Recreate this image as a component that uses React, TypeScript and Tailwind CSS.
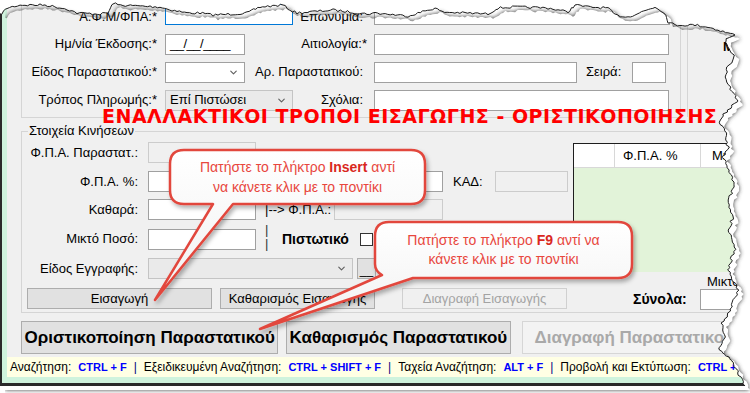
import { ChevronDown } from "lucide-react"
import type { ReactNode } from "react"

type Pt = [number, number]

function rng(seed: number) {
  let s = seed
  return () => {
    s = (s * 16807) % 2147483647
    return (s - 1) / 2147483646
  }
}

// jagged line through anchor points, noise on one axis
function jag(anchors: Pt[], axis: "x" | "y", amp: number, seed: number): Pt[] {
  const r = rng(seed)
  const pts: Pt[] = []
  for (let i = 0; i < anchors.length - 1; i++) {
    const [x0, y0] = anchors[i]
    const [x1, y1] = anchors[i + 1]
    const n = Math.max(1, Math.round(Math.hypot(x1 - x0, y1 - y0) / 2.5))
    for (let k = 0; k < n; k++) {
      const t = k / n
      const d = (r() - 0.5) * 2 * amp
      pts.push([x0 + (x1 - x0) * t + (axis === "x" ? d : 0), y0 + (y1 - y0) * t + (axis === "y" ? d : 0)])
    }
  }
  pts.push(anchors[anchors.length - 1])
  return pts
}

const TOP: Pt[] = [
  [0, 15], [7, 8], [20, 5], [45, 5], [67, 9], [77, 13], [100, 14], [108, 13], [113, 3], [118, 5],
  [160, 7], [167, 9], [187, 13], [200, 13], [213, 15], [233, 14], [247, 13], [260, 7], [283, 5],
  [290, 10], [297, 13], [333, 10], [350, 12], [367, 14], [375, 13], [408, 16], [435, 8], [442, 12],
  [488, 14], [498, 8], [515, 7], [548, 8], [568, 12], [575, 5], [588, 7], [608, 8], [615, 15],
  [628, 17], [655, 7], [665, 13], [668, 22], [675, 25], [695, 25], [708, 27], [718, 30], [728, 33], [735, 35],
]

const RIGHT: Pt[] = [
  [735, 35], [725, 40], [728, 47], [735, 57], [728, 67], [725, 77], [730, 87], [738, 100], [728, 110],
  [719, 120], [725, 133], [728, 147], [723, 157], [728, 170], [735, 187], [728, 200], [733, 217],
  [728, 230], [735, 247], [728, 270], [738, 290], [732, 307], [722, 323], [725, 337], [719, 350],
  [732, 360], [738, 373], [745, 386],
]

function Field({ w, kind = "on", children }: { w: string; kind?: "on" | "off" | "focus"; children?: ReactNode }) {
  const tone =
    kind === "off"
      ? "border-[#cccccc] bg-[#f0f0f0]"
      : kind === "focus"
        ? "border-[#0078d7] bg-white"
        : "border-[#a0a0a0] bg-white"
  return <div className={`h-[21px] shrink-0 border ${tone} ${w} flex items-center px-[4px] text-[13px]`}>{children}</div>
}

function Combo({ w, value, grey }: { w: string; value?: string; grey?: boolean }) {
  return (
    <div
      className={`h-[21px] shrink-0 border ${grey ? "border-[#c4c4c4] bg-[#eaeaea]" : "border-[#a0a0a0] bg-white"} ${w} flex items-center pl-[4px] pr-[5px]`}
    >
      <span className="flex-1 text-[13px]">{value}</span>
      <ChevronDown size={11} strokeWidth={2.5} className="text-[#606060]" />
    </div>
  )
}

function Btn({ w, off, children }: { w: string; off?: boolean; children: ReactNode }) {
  return (
    <div
      className={`h-[21px] shrink-0 border flex items-center justify-center text-[13px] ${off ? "border-[#d0d0d0] bg-[#f0f0f0] text-[#a3a3a3]" : "border-[#adadad] bg-[#e1e1e1] text-black"} ${w}`}
    >
      {children}
    </div>
  )
}

function Lbl1({ children, low }: { children: ReactNode; low?: boolean }) {
  return (
    <div className={`w-[135px] shrink-0 text-right text-[13px] whitespace-nowrap ${low ? "pt-[4px]" : ""}`}>{children}</div>
  )
}

function Lbl2({ children }: { children: ReactNode }) {
  return <div className="w-[116px] shrink-0 text-right text-[13px] whitespace-nowrap">{children}</div>
}

function Key({ children }: { children: ReactNode }) {
  return <span className="font-bold text-[11px] text-[#0000ff]">{children}</span>
}

export default function App() {
  const top = jag(TOP, "y", 1.2, 7)
  const right = jag(RIGHT, "x", 1.6, 11)
  const paper = "M" + [...top, ...right.slice(1)].map(([x, y]) => `${x.toFixed(1)} ${y.toFixed(1)}`).join(" L") + " L0 386 Z"
  const edge = [...top, ...right.slice(1)].map(([x, y]) => `${x.toFixed(1)},${y.toFixed(1)}`).join(" ")

  return (
    <div className="relative w-[750px] h-[393px] overflow-hidden bg-white text-black font-['Liberation_Sans',Arial,sans-serif]">
      <div className="h-[386px] w-[746px] border-l-2 border-b-[3px] border-[#2a2a2a] bg-[#cff3dd] pl-[5px] pb-[6px]">
        <div className="h-full bg-[#f0f0f0] flex flex-col">
          {/* header fields */}
          <div className="flex h-[118px] shrink-0">
            <div className="ml-[14px] w-[660px] h-full border-x border-b border-[#d5d5d5] flex flex-col gap-[7px] pt-[3px]">
              <div className="flex items-center">
                <Lbl1 low>Α.Φ.Μ/ΦΠΑ:*</Lbl1>
                <div className="ml-[8px] w-[198px] flex items-center">
                  <Field w="w-[128px]" kind="focus" />
                  <span className="ml-auto pt-[4px] text-[13px]">Επωνυμία:</span>
                </div>
                <div className="ml-[11px]"><Field w="w-[296px]" /></div>
              </div>
              <div className="flex items-center">
                <Lbl1>Ημ/νία Έκδοσης:*</Lbl1>
                <div className="ml-[8px] w-[198px] flex items-center">
                  <Field w="w-[80px]">
                    <span className="text-[13px] tracking-[-0.5px]">__/__/____</span>
                  </Field>
                  <span className="ml-auto mr-[-4px] text-[13px]">Αιτιολογία:*</span>
                </div>
                <div className="ml-[11px]"><Field w="w-[295px]" /></div>
              </div>
              <div className="flex items-center">
                <Lbl1>Είδος Παραστατικού:*</Lbl1>
                <div className="ml-[8px] w-[198px] flex items-center">
                  <Combo w="w-[80px]" />
                  <span className="ml-auto text-[13px]">Αρ. Παραστατικού:</span>
                </div>
                <div className="ml-[11px] flex items-center">
                  <Field w="w-[203px]" />
                  <span className="ml-[9px] text-[13px]">Σειρά:</span>
                  <div className="ml-[11px]"><Field w="w-[34px]" /></div>
                </div>
              </div>
              <div className="flex items-center">
                <Lbl1>Τρόπος Πληρωμής:*</Lbl1>
                <div className="ml-[8px] w-[198px] flex items-center">
                  <Combo w="w-[128px]" value="Επί Πιστώσει" grey />
                  <span className="ml-auto text-[13px]">Σχόλια:</span>
                </div>
                <div className="ml-[11px]"><Field w="w-[295px]" /></div>
              </div>
            </div>
            <div className="ml-[6px] h-[117px] flex-1 border-l border-[#d5d5d5] pl-[35px] pt-[34px]">
              <span className="font-bold text-[13px]">Μ</span>
            </div>
          </div>

          {/* Στοιχεία Κινήσεων */}
          <div className="relative ml-[14px] mt-[13px] h-[182px] shrink-0 flex border-l border-t border-b border-[#d5d5d5]">
            <span className="absolute left-[6px] top-[-9px] bg-[#f0f0f0] px-[1px] text-[13px] leading-[16px]">Στοιχεία Κινήσεων</span>
            <div className="w-[551px] shrink-0 flex flex-col pt-[10px]">
              <div className="flex items-center">
                <Lbl2>Φ.Π.Α. Παραστατ.:</Lbl2>
                <div className="ml-[10px]"><Field w="w-[108px]" kind="off" /></div>
              </div>
              <div className="mt-[8px] flex items-center">
                <Lbl2>Φ.Π.Α. %:</Lbl2>
                <div className="ml-[10px]"><Field w="w-[108px]" /></div>
                <div className="ml-[79px]"><Field w="w-[108px]" /></div>
                <span className="ml-[10px] text-[13px]">ΚΑΔ:</span>
                <div className="ml-[12px]"><Field w="w-[73px]" kind="off" /></div>
              </div>
              <div className="mt-[7px] flex items-center">
                <Lbl2>Καθαρά:</Lbl2>
                <div className="ml-[10px]"><Field w="w-[108px]" /></div>
                <span className="ml-[9px] w-[69px] text-[13px] whitespace-nowrap">|--&gt; Φ.Π.Α.:</span>
                <Field w="w-[109px]" kind="off" />
              </div>
              <div className="mt-[7px] flex items-center">
                <Lbl2>Μικτό Ποσό:</Lbl2>
                <div className="ml-[10px]"><Field w="w-[108px]" /></div>
                <div className="ml-[9px] w-[4px] flex flex-col text-[13px] leading-[14px] -mt-[4px] text-[#333]">
                  <span>|</span>
                  <span>|</span>
                </div>
                <span className="ml-[13px] font-bold text-[14px]">Πιστωτικό</span>
                <div className="ml-[11px] w-[13px] h-[13px] border border-[#333] bg-white" />
              </div>
              <div className="mt-[7px] flex items-center">
                <Lbl2>Είδος Εγγραφής:</Lbl2>
                <div className="ml-[10px]"><Combo w="w-[205px]" grey /></div>
                <div className="ml-[4px] h-[21px] w-[19px] border border-[#adadad] bg-[#e1e1e1] flex items-end justify-center text-[12px] leading-[16px]">__</div>
              </div>
              <div className="mt-[9px] flex items-center">
                <div className="ml-[5px]"><Btn w="w-[185px]">Εισαγωγή</Btn></div>
                <div className="ml-[8px]"><Btn w="w-[155px]">Καθαρισμός Εισαγωγής</Btn></div>
                <div className="ml-[27px]"><Btn w="w-[165px]" off>Διαγραφή Εισαγωγής</Btn></div>
              </div>
            </div>
            <div className="flex-1 flex flex-col pt-[11px]">
              <div className="h-[129px] border-l border-t border-[#1e1e1e] bg-[#e2f3d9] flex flex-col">
                <div className="h-[24px] bg-white border-b border-[#d8d8d8] flex text-[13px]">
                  <div className="w-[41px] border-r border-[#d8d8d8]" />
                  <div className="w-[86px] border-r border-[#d8d8d8] pl-[8px] flex items-center">Φ.Π.Α. %</div>
                  <div className="flex-1 pl-[11px] flex items-center">Μικτό</div>
                </div>
              </div>
              <div className="mt-[3px] pl-[134px] text-[13px] leading-[13px]">Μικτό</div>
              <div className="mt-[1px] flex items-center">
                <span className="ml-[60px] w-[67px] font-bold text-[14px]">Σύνολα:</span>
                <Field w="w-[60px]" />
              </div>
            </div>
          </div>

          {/* main buttons */}
          <div className="mt-[8px] flex items-center">
            <div className="ml-[14px] h-[33px] w-[264px] border border-[#adadad] bg-[#e1e1e1] flex items-center justify-center font-bold text-[17px]">
              Οριστικοποίηση Παραστατικού
            </div>
            <div className="ml-[8px] h-[33px] w-[230px] border border-[#adadad] bg-[#e1e1e1] flex items-center justify-center font-bold text-[17px]">
              Καθαρισμός Παραστατικού
            </div>
            <div className="ml-[11px] h-[33px] w-[230px] border border-[#d6d6d6] bg-[#f3f3f3] flex items-center pl-[12px] font-bold text-[17px] text-[#a9a9a9] whitespace-nowrap">
              Διαγραφή Παραστατικού
            </div>
          </div>

          {/* shortcuts bar */}
          <div className="mt-[3px] h-[20px] bg-[#ffffe4] flex items-center gap-[7px] pl-[3px] text-[12px] whitespace-nowrap">
            <span>Αναζήτηση:</span>
            <Key>CTRL + F</Key>
            <span className="text-[#000080]">|</span>
            <span>Εξειδικευμένη Αναζήτηση:</span>
            <Key>CTRL + SHIFT + F</Key>
            <span className="text-[#000080]">|</span>
            <span>Ταχεία Αναζήτηση:</span>
            <Key>ALT + F</Key>
            <span className="text-[#000080]">|</span>
            <span>Προβολή και Εκτύπωση:</span>
            <Key>CTRL + P</Key>
          </div>
        </div>
      </div>

      {/* red heading over the group border */}
      <div className="absolute left-[102px] top-[109px] font-['DejaVu_Sans',sans-serif] font-bold text-[19px] leading-[15px] tracking-[0.5px] text-[#ff0000] whitespace-nowrap">
        ΕΝΑΛΛΑΚΤΙΚΟΙ ΤΡΟΠΟΙ ΕΙΣΑΓΩΓΗΣ - ΟΡΙΣΤΙΚΟΠΟΙΗΣΗΣ
      </div>

      {/* callouts */}
      <svg className="absolute left-0 top-0 pointer-events-none" width={750} height={393}>
        <defs>
          <filter id="cs" x="-20%" y="-20%" width="140%" height="160%">
            <feDropShadow dx="2" dy="3" stdDeviation="2" floodColor="#000" floodOpacity="0.3" />
          </filter>
          <linearGradient id="cf" x1="0" y1="0" x2="0" y2="1">
            <stop offset="0" stopColor="#ffffff" />
            <stop offset="1" stopColor="#f1f1f1" />
          </linearGradient>
        </defs>
        <path
          d="M184 150 H411 Q425 150 425 164 V190 Q425 204 411 204 H233 L155 300 L213 204 H184 Q170 204 170 190 V164 Q170 150 184 150 Z"
          fill="url(#cf)"
          stroke="#e2473d"
          strokeWidth="2.5"
          strokeLinejoin="round"
          filter="url(#cs)"
        />
        <path
          d="M389 222 H618 Q632 222 632 236 V264 Q632 278 618 278 H413 L260 329 L382 275 Q375 271 375 264 V236 Q375 222 389 222 Z"
          fill="url(#cf)"
          stroke="#e2473d"
          strokeWidth="2.5"
          strokeLinejoin="round"
          filter="url(#cs)"
        />
      </svg>
      <div className="absolute left-[170px] top-[150px] w-[255px] h-[54px] flex flex-col items-center justify-center text-[14px] leading-[20px] text-[#e8473e] whitespace-nowrap">
        <span>
          Πατήστε το πλήκτρο <b className="text-[#d9281d]">Insert</b> αντί
        </span>
        <span>να κάνετε κλικ με το ποντίκι</span>
      </div>
      <div className="absolute left-[375px] top-[222px] w-[257px] h-[56px] flex flex-col items-center justify-center text-[14px] leading-[19px] text-[#e8473e] whitespace-nowrap">
        <span>
          Πατήστε το πλήκτρο <b className="text-[#d9281d]">F9</b> αντί να
        </span>
        <span>κάνετε κλικ με το ποντίκι</span>
      </div>

      {/* torn paper edges with shadow */}
      <svg className="absolute left-0 top-0 pointer-events-none" width={750} height={393}>
        <defs>
          <filter id="blur" x="-5%" y="-5%" width="110%" height="110%">
            <feGaussianBlur stdDeviation="2" />
          </filter>
          <mask id="outside" maskUnits="userSpaceOnUse" x="0" y="0" width="750" height="393">
            <rect width="750" height="393" fill="white" />
            <path d={paper} fill="black" />
          </mask>
        </defs>
        <path d={"M0 0 H750 V393 H0 Z " + paper} fill="#ffffff" fillRule="evenodd" />
        <path d={paper} transform="translate(5 4)" fill="#3a3a3a" filter="url(#blur)" mask="url(#outside)" />
        <polyline points={edge} fill="none" stroke="#1c1c1c" strokeWidth="1" />
      </svg>
    </div>
  )
}
